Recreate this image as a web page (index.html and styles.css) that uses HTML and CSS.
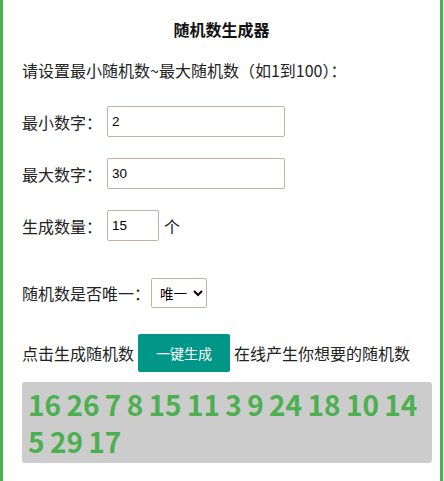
FILE: index.html
```html
<!DOCTYPE html>
<html lang="zh-CN">
<head>
    <meta charset="UTF-8">
    <meta name="viewport" content="width=device-width, initial-scale=1.0">
    <title>随机数生成器</title>
    <link rel="stylesheet" href="styles.css">
</head>
<body>
    <div class="tool">
        <h1 class="title">随机数生成器</h1>
        <div class="body">
            <p class="intro">请设置最小随机数~最大随机数（如1到100）：</p>

            <div class="row row-min">
                <label class="label" for="min">最小数字：</label>
                <input type="text" id="min" class="field" value="2">
            </div>
            <div class="row row-max">
                <label class="label" for="max">最大数字：</label>
                <input type="text" id="max" class="field" value="30">
            </div>
            <div class="row row-count">
                <label class="label" for="count">生成数量：</label>
                <input type="text" id="count" class="field small" value="15">
                <span class="unit">个</span>
            </div>

            <div class="row row-unique">
                <label class="label" for="unique">随机数是否唯一：</label>
                <select id="unique" class="choice">
                    <option>唯一</option>
                    <option>可重复</option>
                </select>
            </div>

            <div class="row row-go">
                <span>点击生成随机数</span>
                <button class="go">一键生成</button>
                <span>在线产生你想要的随机数</span>
            </div>

            <div class="result" id="result">16 26 7 8 15 11 3 9 24 18 10 14 5 29 17</div>
        </div>
    </div>
</body>
</html>
```

FILE: styles.css
```css
* {
    margin: 0;
    padding: 0;
    box-sizing: border-box;
}

body {
    background: #fff;
    color: #222;
    font-family: 'Noto Sans CJK SC', 'Noto Sans', sans-serif;
    font-size: 16px;
}

.tool {
    width: 443px;
    min-height: 481px;
    border-left: 3px solid #4caf50;
    border-right: 3px solid #4caf50;
    padding-top: 17px;
}

.title {
    font-size: 16px;
    font-weight: 700;
    line-height: 24px;
    text-align: center;
    color: #111;
}

.body {
    padding-left: 19px;
}

.intro {
    line-height: 24px;
    margin-top: 17px;
}

.row {
    display: flex;
    align-items: center;
}

.row-min { margin-top: 24px; height: 31px; }
.row-max { margin-top: 21px; height: 31px; }
.row-count { margin-top: 21px; height: 31px; }
.row-unique { margin-top: 37px; height: 30px; }
.row-go { margin-top: 26px; height: 38px; gap: 4px; }

.label {
    width: 85px;
}

.row-unique .label {
    width: 129px;
}

.field {
    width: 178px;
    height: 31px;
    border: 1px solid #c6b0a6;
    border-radius: 2px;
    padding: 0 4px;
    font-family: 'Liberation Sans', Arial, sans-serif;
    font-size: 13.5px;
    color: #000;
    outline: none;
}

.field.small {
    width: 52px;
}

.unit {
    margin-left: 5px;
}

.choice {
    width: 56px;
    height: 30px;
    border: 1px solid #c6b0a6;
    border-radius: 2px;
    background: #fff;
    font-family: 'Noto Sans CJK SC', sans-serif;
    font-size: 13.5px;
    color: #000;
    padding-left: 4px;
}

.go {
    width: 92px;
    height: 38px;
    border: none;
    border-radius: 2px;
    background: #009688;
    color: #fff;
    font-family: 'Noto Sans CJK SC', sans-serif;
    font-size: 14px;
}

.result {
    width: 410px;
    margin-top: 10px;
    padding: 4px 0 3px 6px;
    background: #ccc;
    border-radius: 3px;
    color: #4caf50;
    font-size: 28px;
    font-weight: 700;
    line-height: 37px;
    word-spacing: -1px;
}
```
